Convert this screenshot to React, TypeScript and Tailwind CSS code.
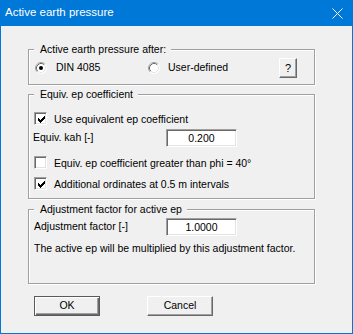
import type { ReactNode } from 'react';

function GroupBox({ label, className = '', children }: { label: string; className?: string; children: ReactNode }) {
  return (
    <div className={`relative w-[287px] border border-[#a0a0a0] shadow-[inset_1px_1px_0_#fff,1px_1px_0_#fff] ${className}`}>
      <span className="absolute left-[5px] top-[-8px] bg-[#f0f0f0] pl-[6px] pr-[5px] leading-[14px] whitespace-nowrap">
        {label}
      </span>
      {children}
    </div>
  );
}

function Radio({ checked = false }: { checked?: boolean }) {
  return (
    <svg width="12" height="12" viewBox="0 0 12 12" className="shrink-0">
      <circle cx="6" cy="6" r="5.5" fill="#fff" />
      <path d="M2.11 9.89 A5.5 5.5 0 0 1 9.89 2.11" fill="none" stroke="#a0a0a0" />
      <path d="M9.89 2.11 A5.5 5.5 0 0 1 2.11 9.89" fill="none" stroke="#fff" />
      <path d="M2.82 9.18 A4.5 4.5 0 0 1 9.18 2.82" fill="none" stroke="#696969" />
      <path d="M9.18 2.82 A4.5 4.5 0 0 1 2.82 9.18" fill="none" stroke="#e3e3e3" />
      {checked && <circle cx="6" cy="6" r="2" fill="#000" />}
    </svg>
  );
}

// classic 7x7 pixel check mark
const CHECK_PIXELS = [
  [6, 0], [5, 1], [6, 1], [0, 2], [4, 2], [5, 2], [6, 2],
  [0, 3], [1, 3], [3, 3], [4, 3], [5, 3], [0, 4], [1, 4], [2, 4], [3, 4], [4, 4],
  [1, 5], [2, 5], [3, 5], [2, 6],
];

function Checkbox({ checked = false }: { checked?: boolean }) {
  return (
    <div className="ml-[1px] flex h-[13px] w-[13px] shrink-0 items-center justify-center border border-t-[#a0a0a0] border-l-[#a0a0a0] border-r-white border-b-white bg-white shadow-[inset_1px_1px_0_#696969,inset_-1px_-1px_0_#e3e3e3]">
      {checked && (
        <svg width="7" height="7" viewBox="0 0 7 7" shapeRendering="crispEdges" className="ml-[1px] mt-[1px]">
          {CHECK_PIXELS.map(([x, y]) => (
            <rect key={`${x}-${y}`} x={x} y={y} width="1" height="1" fill="#000" />
          ))}
        </svg>
      )}
    </div>
  );
}

function Edit({ value }: { value: string }) {
  return (
    <div className="flex h-[18px] w-[71px] items-center justify-center border border-t-[#a0a0a0] border-l-[#a0a0a0] border-r-white border-b-white bg-white shadow-[inset_1px_1px_0_#696969,inset_-1px_-1px_0_#e3e3e3] leading-none">
      {value}
    </div>
  );
}

function CheckRow({ checked, label, className = '' }: { checked?: boolean; label: string; className?: string }) {
  return (
    <div className={`flex h-[13px] items-center gap-[7px] ${className}`}>
      <Checkbox checked={checked} />
      <span className="leading-[14px] whitespace-nowrap">{label}</span>
    </div>
  );
}

export default function App() {
  return (
    <div className="flex h-[334px] w-[353px] flex-col bg-[#0078d7] px-[1px] pb-[1px] font-['Liberation_Sans',Arial,sans-serif] text-[10.5px] text-black">
      <div className="-mx-[1px] flex h-[26px] shrink-0 items-center justify-between pl-[5px] pr-[10px] text-[11.5px] text-white">
        <span>Active earth pressure</span>
        <svg width="11" height="11" viewBox="0 0 11 11">
          <path d="M0.5 0.5 L10.5 10.5 M10.5 0.5 L0.5 10.5" stroke="#fff" strokeWidth="1" />
        </svg>
      </div>

      <div className="flex flex-1 flex-col bg-[#f0f0f0] pl-[27px] pt-[23px]">
        <GroupBox label="Active earth pressure after:" className="h-[36px] pl-[6px] pr-[17px] pt-[8px]">
          <div className="flex h-[20px] items-center">
            <div className="flex w-[113px] items-center gap-[9px]">
              <Radio checked />
              <span>DIN 4085</span>
            </div>
            <div className="flex items-center gap-[8px]">
              <Radio />
              <span>User-defined</span>
            </div>
            <button className="ml-auto flex h-[20px] w-[18px] items-center justify-center border border-t-white border-l-white border-r-[#696969] border-b-[#696969] bg-[#f0f0f0] shadow-[inset_-1px_-1px_0_#a0a0a0] text-[11px]">
              ?
            </button>
          </div>
        </GroupBox>

        <GroupBox label="Equiv. ep coefficient" className="mt-[9px] h-[105px] pl-[4px] pt-[17px]">
          <CheckRow checked label="Use equivalent ep coefficient" />
          <div className="mt-[4px] flex h-[18px] items-center">
            <span className="w-[133px]">Equiv. kah [-]</span>
            <Edit value="0.200" />
          </div>
          <CheckRow label="Equiv. ep coefficient greater than phi = 40°" className="mt-[9px]" />
          <CheckRow checked label="Additional ordinates at 0.5 m intervals" className="mt-[8px]" />
        </GroupBox>

        <GroupBox label="Adjustment factor for active ep" className="mt-[10px] h-[75px] pl-[5px] pt-[8px]">
          <div className="flex h-[18px] items-center">
            <span className="w-[132px]">Adjustment factor [-]</span>
            <Edit value="1.0000" />
          </div>
          <p className="mt-[5px] leading-[14px] whitespace-nowrap">
            The active ep will be multiplied by this adjustment factor.
          </p>
        </GroupBox>

        <div className="ml-[6px] mt-[12px] flex gap-[47px]">
          <button className="h-[20px] w-[66px] border border-[#5a5a5a] bg-[#f0f0f0] shadow-[inset_1px_1px_0_#fff,inset_-1px_-1px_0_#696969,inset_-2px_-2px_0_#a0a0a0]">
            OK
          </button>
          <button className="h-[20px] w-[66px] border border-t-white border-l-white border-r-[#696969] border-b-[#696969] bg-[#f0f0f0] shadow-[inset_-1px_-1px_0_#a0a0a0]">
            Cancel
          </button>
        </div>
      </div>
    </div>
  );
}
